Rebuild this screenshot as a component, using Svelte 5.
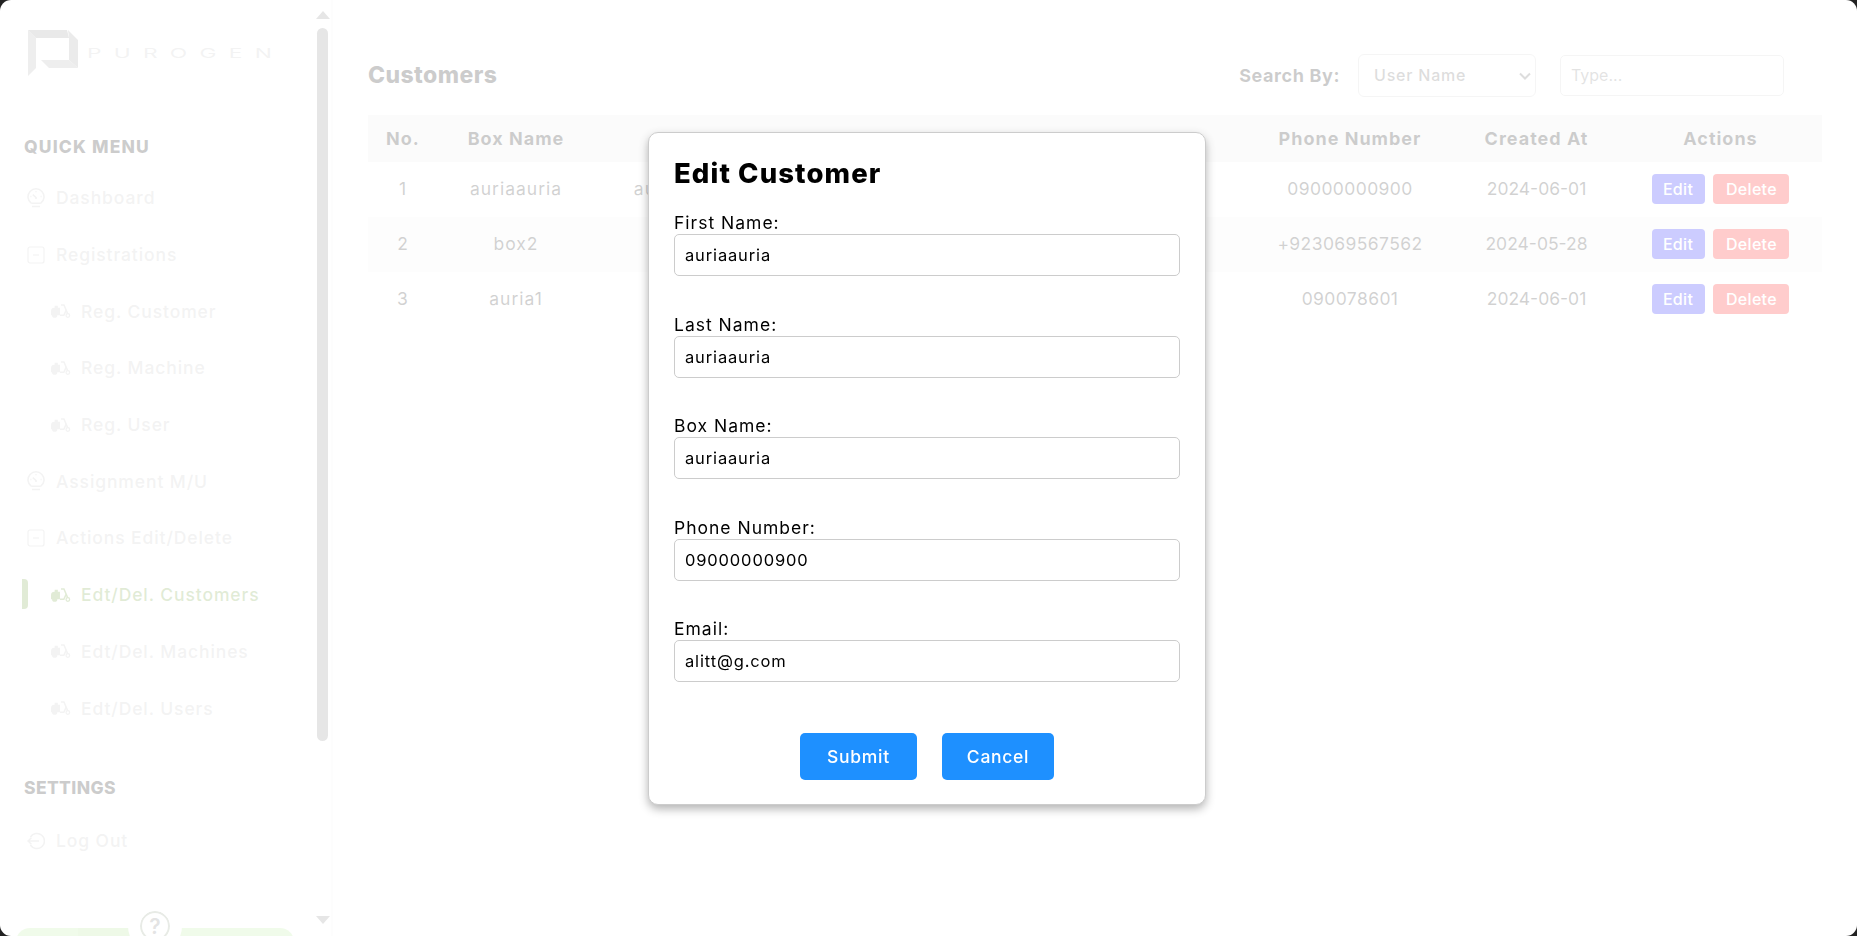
<script>
  // Customers admin page with the edit modal open over a white scrim.
  const scooter = 'scooter', gauge = 'gauge', square = 'square', logout = 'logout';

  const QUICK = [
    { label: 'Dashboard', icon: gauge },
    { label: 'Registrations', icon: square },
    { label: 'Reg. Customer', icon: scooter, sub: true },
    { label: 'Reg. Machine', icon: scooter, sub: true },
    { label: 'Reg. User', icon: scooter, sub: true },
    { label: 'Assignment M/U', icon: gauge },
    { label: 'Actions Edit/Delete', icon: square },
    { label: 'Edt/Del. Customers', icon: scooter, sub: true, active: true },
    { label: 'Edt/Del. Machines', icon: scooter, sub: true },
    { label: 'Edt/Del. Users', icon: scooter, sub: true },
  ];

  const COLUMNS = ['No.', 'Box Name', 'Name', 'Account', 'Phone Number', 'Created At', 'Actions'];
  const ROWS = [
    ['1', 'auriaauria', 'auriaauria auriaauria', 'alitt@g.com', '09000000900', '2024-06-01'],
    ['2', 'box2', 'box two', 'box2@g.com', '+923069567562', '2024-05-28'],
    ['3', 'auria1', 'auria one', 'auria1@g.com', '090078601', '2024-06-01'],
  ];

  const FIELDS = [
    { label: 'First Name:', value: 'auriaauria' },
    { label: 'Last Name:', value: 'auriaauria' },
    { label: 'Box Name:', value: 'auriaauria' },
    { label: 'Phone Number:', value: '09000000900' },
    { label: 'Email:', value: 'alitt@g.com' },
  ];
</script>

{#snippet icon(name)}
  {#if name === 'gauge'}
    <svg class="ico tall" viewBox="0 0 18 20" fill="none" stroke="currentColor" stroke-width="1.5" aria-hidden="true">
      <path d="M4.2 15.2A8 8 0 1 1 13.8 15.2" />
      <path d="M4.2 15.2h9.6M5 18.6h8" />
      <path d="M9 9.5 5.8 6.6M3.4 8.5h1M13.6 8.5h1M9 3.2v1" />
      <circle cx="9" cy="10" r="1.1" fill="currentColor" stroke="none" />
    </svg>
  {:else if name === 'square'}
    <svg class="ico" viewBox="0 0 18 18" fill="none" stroke="currentColor" stroke-width="1.2" aria-hidden="true">
      <rect x="1" y="1" width="16" height="16" rx="2" />
      <path d="M6 9h6" />
    </svg>
  {:else if name === 'logout'}
    <svg class="ico" viewBox="0 0 18 18" fill="none" stroke="currentColor" stroke-width="1.5" aria-hidden="true">
      <path d="M3.4 5A7.6 7.6 0 1 1 3.4 13" />
      <path d="M12 9H1M4.4 5.8 1 9l3.4 3.2" />
    </svg>
  {:else}
    <svg class="ico wide" viewBox="0 0 19 13" aria-hidden="true">
      <path fill="currentColor" d="M0 6.5C0 4.5 1.5 3.5 3 3.5h.5v-2h3v2h2v7H6a2.5 2.5 0 0 1-5 0H0z" />
      <path fill="none" stroke="currentColor" stroke-width="1.4" d="M9.5.8h2.8l3.6 8.4M8.5 10.5h3.7l2-4.4" />
      <circle cx="16" cy="10.8" r="1.7" fill="none" stroke="currentColor" stroke-width="1.2" />
    </svg>
  {/if}
{/snippet}

<div class="page">
  <aside class="sidebar">
    <div class="side-body">
      <div class="logo">
        <svg class="logo-mark" viewBox="0 0 50 46" aria-hidden="true">
          <path fill="#a8a8a8" d="M0 0 8 8V38L0 46z" />
          <path fill="#8f8f8f" d="M0 0H39L41 8H8z" />
          <path fill="#9a9a9a" d="M40 0 50 10V38L41 30V8z" />
          <path fill="#a8a8a8" d="M13 30H41L50 38H21z" />
        </svg>
        <span class="logo-text">PUROGEN</span>
      </div>

      <h3 class="sec quick">QUICK MENU</h3>
      <nav>
        {#each QUICK as item}
          <div class="item" class:sub={item.sub} class:active={item.active}>
            {@render icon(item.icon)}
            <span>{item.label}</span>
          </div>
        {/each}
      </nav>

      <h3 class="sec settings">SETTINGS</h3>
      <div class="item">
        {@render icon(logout)}
        <span>Log Out</span>
      </div>

      <div class="help">
        <div class="help-pill"><span class="tint"></span></div>
        <span class="help-q">?</span>
      </div>
    </div>

    <div class="rail" aria-hidden="true">
      <span class="arrow up"></span>
      <span class="thumb"></span>
      <span class="arrow down"></span>
    </div>
  </aside>

  <main class="main">
    <header class="top">
      <h2>Customers</h2>
      <div class="search">
        <b>Search By:</b>
        <div class="select-wrap">
          <select>
            <option>User Name</option>
          </select>
          <svg class="chev" viewBox="0 0 12 8" fill="none" stroke="currentColor" stroke-width="2" aria-hidden="true">
            <path d="M1 1.5 6 6.5 11 1.5" />
          </svg>
        </div>
        <input placeholder="Type..." />
      </div>
    </header>

    <table>
      <colgroup>
        <col style="width:70px" /><col style="width:156px" /><col style="width:270px" /><col style="width:382px" />
        <col style="width:208px" /><col style="width:165px" /><col style="width:203px" />
      </colgroup>
      <thead>
        <tr>
          {#each COLUMNS as c}<th>{c}</th>{/each}
        </tr>
      </thead>
      <tbody>
        {#each ROWS as row}
          <tr>
            {#each row as cell}<td>{cell}</td>{/each}
            <td class="acts">
              <button class="edit">Edit</button>
              <button class="del">Delete</button>
            </td>
          </tr>
        {/each}
      </tbody>
    </table>
  </main>
</div>

<div class="scrim">
  <form class="modal">
    <h2>Edit Customer</h2>
    {#each FIELDS as f}
      <label class="field">
        <span>{f.label}</span>
        <input value={f.value} />
      </label>
    {/each}
    <div class="btns">
      <button type="button" class="submit">Submit</button>
      <button type="button" class="cancel">Cancel</button>
    </div>
  </form>
</div>

<div class="frame" aria-hidden="true"></div>

<style>
  :global(body) {
    margin: 0;
    background: #fff;
    overflow: hidden;
    font-family: Inter, "Noto Sans", sans-serif;
  }

  .page { display: flex; height: 936px; overflow: hidden; color: #000; }

  /* sidebar */
  .sidebar {
    width: 333px; flex: none; box-sizing: border-box; display: flex;
    border-right: 2px solid #f4f4f4; overflow: hidden;
  }
  .side-body { flex: 1; min-width: 0; padding: 30px 0 0 24px; }

  .logo { display: flex; align-items: center; height: 46px; margin-left: 4px; }
  .logo-mark { width: 50px; height: 46px; flex: none; }
  .logo-text {
    margin-left: 9px; font-size: 13px; font-weight: 400; color: #c0c0c0;
    letter-spacing: 7px; transform: scaleX(1.75); transform-origin: left center;
  }

  .sec { margin: 0; font-size: 17.5px; font-weight: 800; letter-spacing: .35px; color: #000; line-height: 24px; }
  .quick { margin-top: 58.5px; margin-bottom: 11px; letter-spacing: 1.15px; }
  .settings { margin-top: 40px; }

  .item {
    display: flex; align-items: center; height: 56.7px; gap: 11px; padding-left: 3px;
    color: #c0c0c0; font-size: 17.5px; font-weight: 500; letter-spacing: .9px; position: relative;
  }
  .item.sub { padding-left: 27px; gap: 10px; }
  .item.active { color: #6a9c34; }
  .item.active::before {
    content: ""; position: absolute; left: -2px; top: 13px; width: 6px; height: 30px;
    border-radius: 0 4px 4px 0; background: #6a9c34;
  }
  .settings + .item { margin-top: 12px; }
  .ico { width: 18px; height: 18px; flex: none; }
  .ico.tall { height: 20px; }
  .ico.wide { width: 20px; height: 14px; }

  .help { position: relative; margin: 42px 0 0 -8px; width: 278px; height: 40px; }
  .help-pill {
    position: absolute; left: 0; right: 0; top: 17px; height: 40px; border-radius: 14px;
    background: #b6eb96; overflow: hidden;
  }
  .tint { position: absolute; left: 62px; width: 55px; top: 0; bottom: 0; background: #a9e288; }
  .help-q {
    position: absolute; left: 124px; top: 0; width: 26px; height: 26px; box-sizing: content-box;
    border: 2px solid #8a9a80; border-radius: 50%; outline: 12.5px solid #fff; background: #fff;
    display: flex; align-items: center; justify-content: center;
    font-size: 21px; font-weight: 600; color: #777;
  }

  .rail {
    width: 15px; flex: none; margin-right: 1px; display: flex; flex-direction: column;
    align-items: center; padding-top: 11px;
  }
  .arrow { width: 0; height: 0; border-left: 7px solid transparent; border-right: 7px solid transparent; flex: none; }
  .arrow.up { border-bottom: 8px solid #808080; }
  .arrow.down { border-top: 8px solid #808080; margin-top: 175px; }
  .thumb { width: 11px; height: 713px; margin-top: 9px; border-radius: 6px; background: #808080; flex: none; }

  /* main */
  .main { flex: 1; min-width: 0; padding: 53px 35px 0 35px; }
  .top { display: flex; align-items: center; justify-content: space-between; height: 44px; padding-right: 38px; }
  .top h2 { margin: 0; font-size: 23px; font-weight: 800; letter-spacing: .4px; }
  .search { display: flex; align-items: center; }
  .search b { font-size: 18px; font-weight: 700; letter-spacing: .6px; margin-right: 18px; }
  .select-wrap { position: relative; margin-right: 24px; height: 43px; color: #555; }
  .select-wrap select {
    display: block; appearance: none; width: 178px; height: 43px; padding: 0 15px; background: #fff;
    border: 1px solid #ccc; border-radius: 6px; font: 500 16px Inter, sans-serif; letter-spacing: .8px; color: #555;
  }
  .chev { position: absolute; right: 5px; top: 18px; width: 12px; height: 8px; }
  .search input {
    width: 224px; height: 41px; box-sizing: border-box; padding: 0 10px; border: 1px solid #ccc;
    border-radius: 5px; font: 400 16px Inter, sans-serif;
  }

  table { width: 1454px; margin-top: 18px; border-collapse: collapse; table-layout: fixed; }
  th {
    height: 46.5px; padding: 0; font-size: 18px; font-weight: 700; letter-spacing: 1px; color: #000;
    background: #ececec; text-align: center;
  }
  td {
    height: 55px; padding: 0 0 2px; box-sizing: border-box; font-size: 17.5px; font-weight: 400; letter-spacing: 1px;
    color: #1a1a1a; text-align: center; white-space: nowrap;
  }
  td:nth-child(5) { letter-spacing: .4px; }
  td:nth-child(6) { letter-spacing: 0; }
  tbody tr:nth-child(2) td { background: #f5f5f5; }
  td.acts { padding: 0; }
  .acts button {
    height: 30px; border: 0; border-radius: 4px; color: #fff; font: 500 16px Inter, sans-serif;
    letter-spacing: .3px; padding: 0;
  }
  .edit { width: 53px; background: #0000ff; margin-right: 3px; }
  .del { width: 76px; background: #ff0000; }

  /* modal */
  .scrim {
    position: fixed; inset: 0; padding-right: 3px; background: rgba(255, 255, 255, .8);
    display: flex; align-items: center; justify-content: center;
  }
  .modal {
    width: 558px; height: 673px; box-sizing: border-box; padding: 22.5px 25px 0; background: #fff;
    border: 1px solid #ccc; border-radius: 10px; box-shadow: 0 4px 10px rgba(0, 0, 0, .3);
  }
  .modal h2 { margin: 0 0 21px; font-size: 27.5px; line-height: 36px; font-weight: 800; color: #000; letter-spacing: 1.1px; }
  .field { display: block; height: 101.5px; font-size: 17.5px; font-weight: 400; color: #000; }
  .field span { display: block; height: 22px; line-height: 22px; letter-spacing: 1px; }
  .field input {
    display: block; width: 100%; height: 42px; box-sizing: border-box; padding: 0 10px;
    border: 1px solid #ccc; border-radius: 5px; font: 400 16.5px Inter, sans-serif; color: #000; letter-spacing: .85px;
    background: #fff; outline: none;
  }
  .btns { display: flex; justify-content: center; gap: 25px; margin-top: 13px; }
  .btns button {
    height: 47px; padding: 0; border: 0; border-radius: 5px; background: #1e90ff; color: #fff;
    font: 500 17.5px Inter, sans-serif; letter-spacing: .7px;
  }
  .submit { width: 117px; }
  .cancel { width: 112px; }

  /* rounded window corners of the capture */
  .frame {
    position: fixed; inset: 0; border-radius: 11px; pointer-events: none;
    box-shadow: 0 0 0 12px #222;
  }
</style>
